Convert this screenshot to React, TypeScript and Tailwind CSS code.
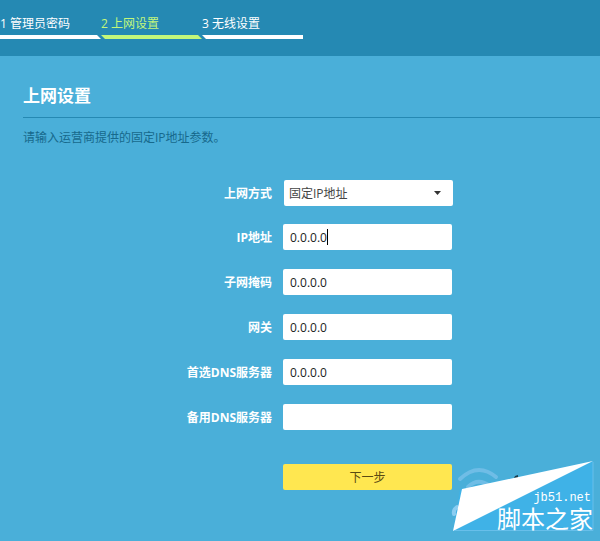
import { useState } from 'react';

const steps = [
  { label: '1 管理员密码', shape: '[clip-path:polygon(0_0,calc(100%-4px)_0,100%_100%,0_100%)]' },
  { label: '2 上网设置', shape: '[clip-path:polygon(0_0,calc(100%-4px)_0,100%_100%,4px_100%)]', active: true },
  { label: '3 无线设置', shape: '[clip-path:polygon(0_0,100%_0,100%_100%,4px_100%)]' },
];

const initialFields = [
  { id: 'ip', label: 'IP地址', value: '0.0.0.0', caret: true },
  { id: 'mask', label: '子网掩码', value: '0.0.0.0' },
  { id: 'gateway', label: '网关', value: '0.0.0.0' },
  { id: 'dns1', label: '首选DNS服务器', value: '0.0.0.0' },
  { id: 'dns2', label: '备用DNS服务器', value: '' },
];

function Steps() {
  return (
    <header className="h-14 bg-[#2589b3] pt-[15px]">
      <ol className="flex text-xs">
        {steps.map((step) => (
          <li
            key={step.label}
            aria-current={step.active ? 'step' : undefined}
            className={step.active ? 'w-[101px] text-[#c3f77b]' : 'w-[101px] text-white'}
          >
            <span className="block h-5 leading-[18px]">{step.label}</span>
            <span className={`block h-1 bg-current ${step.shape}`} />
          </li>
        ))}
      </ol>
    </header>
  );
}

function Watermark() {
  return (
    <div className="pointer-events-none absolute right-[7px] bottom-[10px] h-[70px] w-[140px]">
      <svg className="absolute inset-0 size-full overflow-visible" viewBox="0 0 140 70" aria-hidden="true">
        <path d="M7 28 L140 0 V70 H0Z" fill="#3fb2e7" />
        <g fill="none" stroke="#6fbde6" strokeWidth="4" strokeLinecap="round">
          <path d="M7 18 Q25 1 43 16" />
          <path d="M15 26 Q25 16 37 25" />
          <path d="M1 53 Q0 49 4 46" stroke="#8bcdf1" />
        </g>
        <path d="M62 15 l3 -1 v3 h-4z" fill="#173b4b" />
        <path d="M9 28 L140 0 L0 70Z" fill="white" />
        <path d="M140 1 V69.500 H2" fill="none" stroke="#68bfea" strokeWidth="1" />
      </svg>
      <div className="relative flex flex-col items-end pt-[29px] text-white">
        <span className="pr-[2px] font-['Liberation_Mono',monospace] text-xs leading-4">jb51.net</span>
        <span className="font-['Liberation_Sans','Noto_Sans_CJK_SC',sans-serif] text-2xl leading-7 whitespace-nowrap">
          脚本之家
        </span>
      </div>
    </div>
  );
}

export default function App() {
  const [fields, setFields] = useState(initialFields);

  const update = (id: string, value: string) =>
    setFields((list) => list.map((f) => (f.id === id ? { ...f, value } : f)));

  return (
    <div className="relative min-h-screen overflow-hidden bg-[#4aafd9] font-['Open_Sans','Noto_Sans_CJK_SC',sans-serif]">
      <Steps />
      <main className="pt-6 pl-[23px]">
        <h1 className="border-b border-[#2589b3] pb-[5px] text-[17px] leading-8 font-bold text-white">上网设置</h1>
        <p className="pt-[11px] text-xs leading-[18px] text-[#17698c]">请输入运营商提供的固定IP地址参数。</p>
        <form className="flex flex-col gap-[18px] pt-[33px] text-xs" onSubmit={(e) => e.preventDefault()}>
          <div className="flex h-[26px] items-center gap-3">
            <label htmlFor="mode" className="w-[249px] pt-[2px] text-right font-bold text-white">
              上网方式
            </label>
            <div className="relative">
              <select
                id="mode"
                className="block h-[26px] w-[169px] appearance-none rounded-xs bg-white px-[5px] pt-[2px] text-[#444] outline-none"
              >
                <option>固定IP地址</option>
              </select>
              <svg className="pointer-events-none absolute top-[11px] right-3 h-1 w-[7px]" viewBox="0 0 7 4" aria-hidden="true">
                <path d="M0 0H7L3.500 4Z" fill="#333" />
              </svg>
            </div>
          </div>
          <div className="flex flex-col gap-[19px]">
            {fields.map((f) => (
              <div key={f.id} className="flex h-[26px] items-center gap-[11px]">
                <label htmlFor={f.id} className="w-[249px] pt-[2px] text-right font-bold text-white">
                  {f.label}
                </label>
                <div className="relative">
                  <input
                    id={f.id}
                    type="text"
                    value={f.value}
                    onChange={(e) => update(f.id, e.target.value)}
                    className="block h-[26px] w-[169px] rounded-xs bg-white px-[7px] text-[#222] caret-transparent outline-none"
                  />
                  {f.caret && <span className="absolute top-[5px] left-[44px] h-4 w-px bg-black" />}
                </div>
              </div>
            ))}
          </div>
          <button
            type="submit"
            className="mt-4 ml-[260px] h-[26px] w-[169px] rounded-xs bg-[#ffe750] pt-px text-[#5a4a12]"
          >
            下一步
          </button>
        </form>
      </main>
      <Watermark />
    </div>
  );
}
